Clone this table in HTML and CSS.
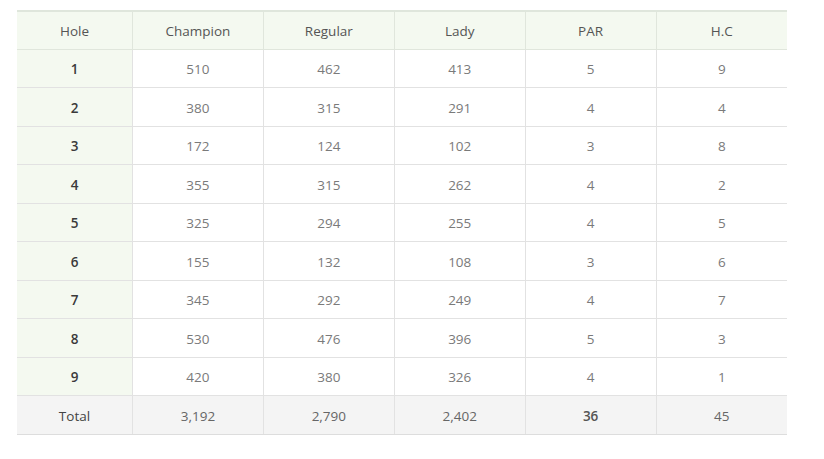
FILE: index.html
```html
<!DOCTYPE html>
<html>
<head>
<meta charset="utf-8">
<link rel="stylesheet" href="styles.css">
</head>
<body>
<div class="wrap">
<table class="score">
<thead>
<tr><th>Hole</th><th>Champion</th><th>Regular</th><th>Lady</th><th>PAR</th><th>H.C</th></tr>
</thead>
<tbody>
<tr><td class="hole">1</td><td>510</td><td>462</td><td>413</td><td>5</td><td>9</td></tr>
<tr><td class="hole">2</td><td>380</td><td>315</td><td>291</td><td>4</td><td>4</td></tr>
<tr><td class="hole">3</td><td>172</td><td>124</td><td>102</td><td>3</td><td>8</td></tr>
<tr><td class="hole">4</td><td>355</td><td>315</td><td>262</td><td>4</td><td>2</td></tr>
<tr><td class="hole">5</td><td>325</td><td>294</td><td>255</td><td>4</td><td>5</td></tr>
<tr><td class="hole">6</td><td>155</td><td>132</td><td>108</td><td>3</td><td>6</td></tr>
<tr><td class="hole">7</td><td>345</td><td>292</td><td>249</td><td>4</td><td>7</td></tr>
<tr><td class="hole">8</td><td>530</td><td>476</td><td>396</td><td>5</td><td>3</td></tr>
<tr><td class="hole">9</td><td>420</td><td>380</td><td>326</td><td>4</td><td>1</td></tr>
</tbody>
<tfoot>
<tr><td class="total-label">Total</td><td>3,192</td><td>2,790</td><td>2,402</td><td class="par">36</td><td class="hc">45</td></tr>
</tfoot>
</table>
</div>
</body>
</html>
```
FILE: styles.css
```css
html, body {
  margin: 0;
  padding: 0;
  background: #ffffff;
}
.wrap {
  padding: 10px 37px 0 17px;
}
.score {
  width: 770px;
  border-collapse: collapse;
  table-layout: fixed;
  font-family: "Open Sans", "Noto Sans", sans-serif;
  font-size: 13.5px;
  text-align: center;
  border-top: 2px solid #dfe6dc;
}
.score th, .score td {
  height: 35.5px;
  padding: 2px 0 0;
  border-bottom: 1px solid #e2e2e2;
  border-left: 1px solid #e2e2e2;
  color: #7a7a7a;
  font-weight: 400;
}
.score th {
  height: 34.5px;
  background: #f4f9f0;
  color: #555555;
  border-bottom-color: #e0e6dc;
  border-left-color: #e0e6dc;
}
.score th:first-child, .score td:first-child {
  border-left: none;
  width: 115px;
}
.score td.hole {
  background: #f4f9f0;
  color: #3a3a3a;
  font-weight: 600;
}
.score tfoot td {
  background: #f4f4f4;
  color: #666666;
  border-bottom-color: #dddddd;
}
.score tfoot td.total-label {
  color: #444444;
}
.score tfoot td.par {
  font-weight: 600;
  color: #555555;
}
```
